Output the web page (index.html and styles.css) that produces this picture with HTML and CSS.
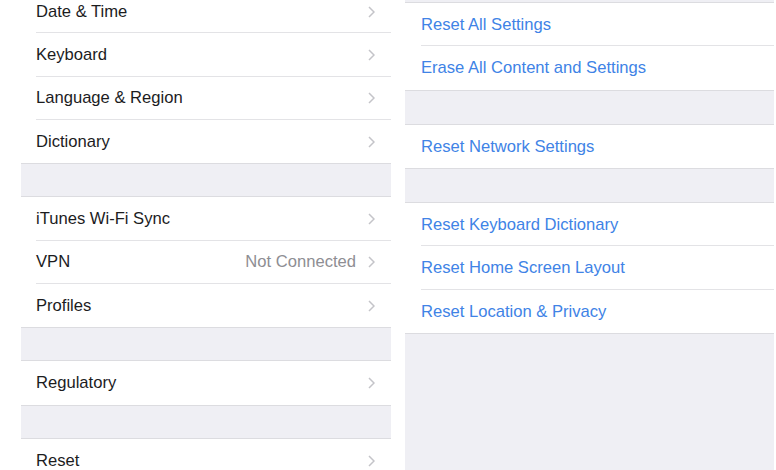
FILE: index.html
```html
<!DOCTYPE html>
<html>
<head>
<meta charset="utf-8">
<link rel="stylesheet" href="styles.css">
</head>
<body>
<div class="screen">
  <div class="panel panel-left">
    <div class="group group-first">
      <div class="row"><div class="row-inner"><span class="label">Date &amp; Time</span><svg class="chev" viewBox="0 0 7 12"><polyline points="1,1 6,6 1,11"/></svg></div></div>
      <div class="row"><div class="row-inner"><span class="label">Keyboard</span><svg class="chev" viewBox="0 0 7 12"><polyline points="1,1 6,6 1,11"/></svg></div></div>
      <div class="row"><div class="row-inner"><span class="label">Language &amp; Region</span><svg class="chev" viewBox="0 0 7 12"><polyline points="1,1 6,6 1,11"/></svg></div></div>
      <div class="row"><div class="row-inner"><span class="label">Dictionary</span><svg class="chev" viewBox="0 0 7 12"><polyline points="1,1 6,6 1,11"/></svg></div></div>
    </div>
    <div class="group">
      <div class="row"><div class="row-inner"><span class="label">iTunes Wi-Fi Sync</span><svg class="chev" viewBox="0 0 7 12"><polyline points="1,1 6,6 1,11"/></svg></div></div>
      <div class="row"><div class="row-inner"><span class="label">VPN</span><span class="value">Not Connected</span><svg class="chev" viewBox="0 0 7 12"><polyline points="1,1 6,6 1,11"/></svg></div></div>
      <div class="row"><div class="row-inner"><span class="label">Profiles</span><svg class="chev" viewBox="0 0 7 12"><polyline points="1,1 6,6 1,11"/></svg></div></div>
    </div>
    <div class="group">
      <div class="row"><div class="row-inner"><span class="label">Regulatory</span><svg class="chev" viewBox="0 0 7 12"><polyline points="1,1 6,6 1,11"/></svg></div></div>
    </div>
    <div class="group">
      <div class="row"><div class="row-inner"><span class="label">Reset</span><svg class="chev" viewBox="0 0 7 12"><polyline points="1,1 6,6 1,11"/></svg></div></div>
    </div>
  </div>
  <div class="panel panel-right">
    <div class="group">
      <div class="row"><div class="row-inner"><span class="action">Reset All Settings</span></div></div>
      <div class="row"><div class="row-inner"><span class="action">Erase All Content and Settings</span></div></div>
    </div>
    <div class="group">
      <div class="row"><div class="row-inner"><span class="action">Reset Network Settings</span></div></div>
    </div>
    <div class="group">
      <div class="row"><div class="row-inner"><span class="action">Reset Keyboard Dictionary</span></div></div>
      <div class="row"><div class="row-inner"><span class="action">Reset Home Screen Layout</span></div></div>
      <div class="row"><div class="row-inner"><span class="action">Reset Location &amp; Privacy</span></div></div>
    </div>
  </div>
</div>
</body>
</html>
```
FILE: styles.css
```css
html, body {
  margin: 0;
  padding: 0;
  background: #ffffff;
}
body {
  font-family: "Liberation Sans", Arial, sans-serif;
  font-size: 16.6px;
  width: 776px;
  height: 470px;
  overflow: hidden;
}
.screen {
  display: flex;
  gap: 14px;
  padding-left: 21px;
  height: 470px;
}
.panel {
  width: 370px;
  height: 470px;
  background: #efeff4;
  overflow: hidden;
  display: flex;
  flex-direction: column;
  gap: 33px;
}
.panel-left {
  gap: 32px;
}
.panel-right {
  padding-top: 2px;
  width: 369px;
  box-sizing: border-box;
}
.group-first {
  margin-top: -11px;
}
.group {
  background: #ffffff;
  border-top: 1px solid #dcdce0;
  border-bottom: 1px solid #dcdce0;
  flex-shrink: 0;
}
.row {
  height: 43.33px;
  padding-left: 15px;
  box-sizing: border-box;
}
.panel-right .row {
  padding-left: 16px;
}
.row-inner {
  height: 100%;
  box-sizing: border-box;
  border-bottom: 1px solid #e3e3e6;
  display: flex;
  align-items: center;
  padding-right: 16px;
  padding-top: 1px;
}
.row:last-child .row-inner {
  border-bottom: none;
}
.label {
  color: #1c1c1e;
  flex: 1;
}
.value {
  color: #8e8e93;
  margin-right: 12px;
}
.action {
  color: #4083e6;
}
.chev {
  width: 7px;
  height: 12px;
  fill: none;
  stroke: #c4c4c9;
  stroke-width: 1.5;
  flex-shrink: 0;
}
```
